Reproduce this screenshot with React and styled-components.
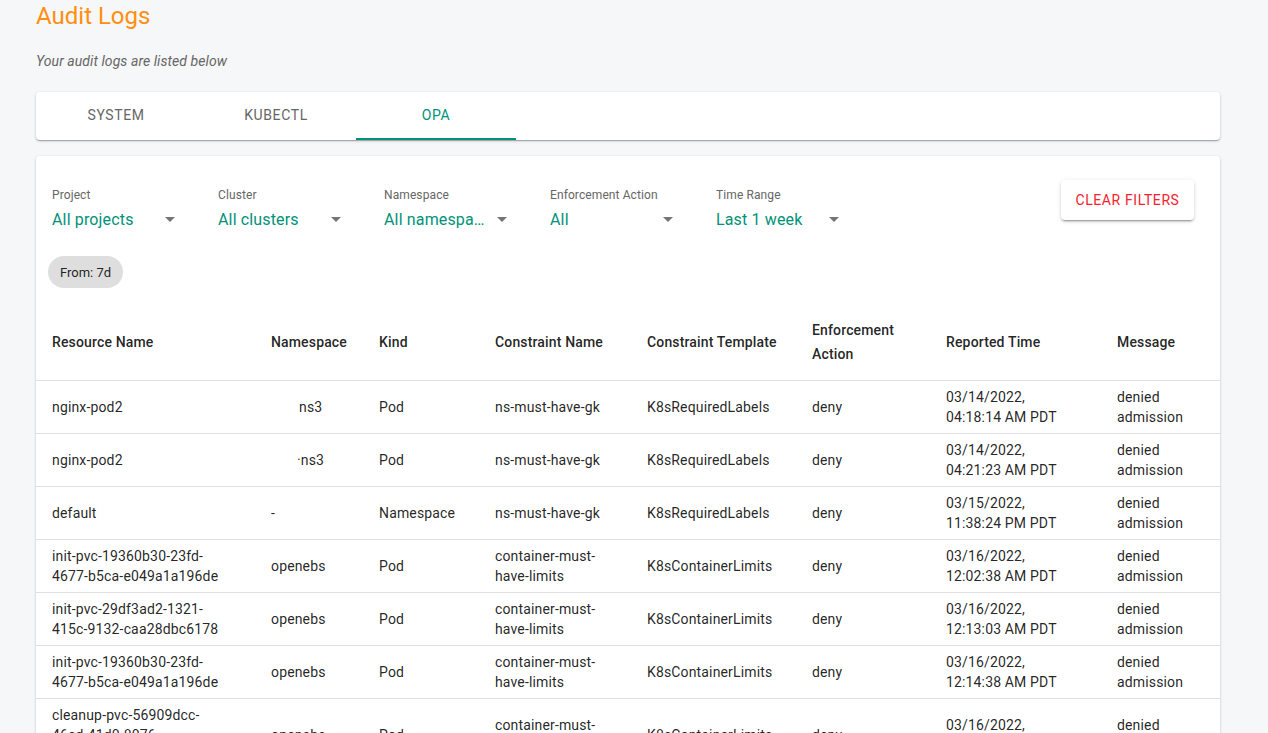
import React from "react";
import styled, { createGlobalStyle } from "styled-components";

const GlobalStyle = createGlobalStyle`
  html, body {
    margin: 0;
    height: 100%;
    overflow: hidden;
    background: #f6f7f9;
    font-family: Roboto, "Liberation Sans", sans-serif;
  }
`;

const Page = styled.div`
  height: 733px;
  overflow: hidden;
  padding: 0 48px 0 36px;
  box-sizing: border-box;
`;

const Title = styled.h1`
  margin: 0;
  font-size: 24px;
  font-weight: 400;
  line-height: 32px;
  color: #ff8f0f;
`;

const Subtitle = styled.p`
  margin: 19px 0 21px;
  font-size: 14px;
  font-style: italic;
  line-height: 20px;
  letter-spacing: 0.07px;
  color: #666;
`;

const Paper = styled.div`
  background: #fff;
  border-radius: 4px;
  box-shadow: 0 1px 3px rgba(0, 0, 0, 0.2), 0 1px 1px rgba(0, 0, 0, 0.14), 0 2px 1px -1px rgba(0, 0, 0, 0.12);
`;

const TabBar = styled(Paper)`
  display: flex;
  height: 48px;
  margin-bottom: 16px;
`;

const Tab = styled.div`
  width: 160px;
  display: flex;
  align-items: center;
  justify-content: center;
  box-sizing: border-box;
  font-size: 14px;
  font-weight: 400;
  letter-spacing: 0.6px;
  color: ${(p) => (p.$active ? "#009279" : "#666")};
  border-bottom: 2px solid ${(p) => (p.$active ? "#009279" : "transparent")};
`;

const Filters = styled.div`
  display: flex;
  align-items: flex-start;
  padding: 24px 26px 0 16px;
`;

const Select = styled.div`
  width: 126px;
  margin-right: 40px;
  padding-top: 8px;
`;

const SelectLabel = styled.div`
  font-size: 12px;
  line-height: 14px;
  letter-spacing: 0.1px;
  color: #666;
`;

const SelectValue = styled.div`
  display: flex;
  align-items: center;
  justify-content: space-between;
  margin-top: 5px;
  margin-right: -4px;
  height: 24px;
  font-size: 16px;
  letter-spacing: 0.15px;
  color: #009279;
`;

const ValueText = styled.span`
  width: 104px;
  white-space: nowrap;
  overflow: hidden;
  text-overflow: ellipsis;
`;

const Arrow = styled.svg`
  width: 24px;
  height: 24px;
  fill: #757575;
  flex: none;
`;

const ClearButton = styled.button`
  margin-left: auto;
  width: 133px;
  height: 40px;
  padding: 0;
  border: 0;
  border-radius: 4px;
  background: #fff;
  box-shadow: 0 3px 1px -2px rgba(0, 0, 0, 0.2), 0 2px 2px rgba(0, 0, 0, 0.14), 0 1px 5px rgba(0, 0, 0, 0.12);
  font-family: inherit;
  font-size: 14px;
  font-weight: 400;
  letter-spacing: 0.6px;
  color: #f5222d;
`;

const Chips = styled.div`
  padding: 25px 12px 16px;
`;

const Chip = styled.span`
  display: inline-flex;
  align-items: center;
  height: 32px;
  padding: 0 12px;
  border-radius: 16px;
  background: #dedede;
  font-size: 13px;
  color: rgba(0, 0, 0, 0.87);
`;

const Table = styled.table`
  width: 100%;
  table-layout: fixed;
  border-collapse: collapse;
`;

const HeadCell = styled.th`
  height: 76px;
  padding: 0 8px 0 16px;
  text-align: left;
  font-size: 14px;
  font-weight: 500;
  line-height: 24px;
  letter-spacing: 0.15px;
  color: rgba(0, 0, 0, 0.87);
  border-bottom: 1px solid #e0e0e0;
`;

const Cell = styled.td`
  height: 40px;
  padding: 6px ${(p) => p.$right || 8}px 6px 16px;
  font-size: 14px;
  line-height: 20px;
  letter-spacing: 0.15px;
  color: rgba(0, 0, 0, 0.87);
  border-bottom: 1px solid #e0e0e0;
  overflow-wrap: anywhere;
`;

const Indented = styled.span`
  display: inline-block;
  margin-left: ${(p) => p.$by}px;
`;

const filters = [
  ["Project", "All projects"],
  ["Cluster", "All clusters"],
  ["Namespace", "All namespaces"],
  ["Enforcement Action", "All"],
  ["Time Range", "Last 1 week"],
];

const widths = [219, 108, 116, 152, 165, 134, 171, 119];
const heads = ["Resource Name", "Namespace", "Kind", "Constraint Name", "Constraint Template", "Enforcement Action", "Reported Time", "Message"];

const rows = [
  ["nginx-pod2", <Indented $by={28}>ns3</Indented>, "Pod", "ns-must-have-gk", "K8sRequiredLabels", "03/14/2022, 04:18:14 AM PDT"],
  ["nginx-pod2", <Indented $by={26}>·ns3</Indented>, "Pod", "ns-must-have-gk", "K8sRequiredLabels", "03/14/2022, 04:21:23 AM PDT"],
  ["default", "-", "Namespace", "ns-must-have-gk", "K8sRequiredLabels", "03/15/2022, 11:38:24 PM PDT"],
  ["init-pvc-19360b30-23fd-4677-b5ca-e049a1a196de", "openebs", "Pod", "container-must-have-limits", "K8sContainerLimits", "03/16/2022, 12:02:38 AM PDT"],
  ["init-pvc-29df3ad2-1321-415c-9132-caa28dbc6178", "openebs", "Pod", "container-must-have-limits", "K8sContainerLimits", "03/16/2022, 12:13:03 AM PDT"],
  ["init-pvc-19360b30-23fd-4677-b5ca-e049a1a196de", "openebs", "Pod", "container-must-have-limits", "K8sContainerLimits", "03/16/2022, 12:14:38 AM PDT"],
  ["cleanup-pvc-56909dcc-46ed-41d0-8076-0d2c5ee1f7a4", "openebs", "Pod", "container-must-have-limits", "K8sContainerLimits", "03/16/2022, 12:20:11 AM PDT"],
];

export default function App() {
  return (
    <Page>
      <GlobalStyle />
      <Title>Audit Logs</Title>
      <Subtitle>Your audit logs are listed below</Subtitle>
      <TabBar>
        <Tab>SYSTEM</Tab>
        <Tab>KUBECTL</Tab>
        <Tab $active>OPA</Tab>
      </TabBar>
      <Paper>
        <Filters>
          {filters.map(([label, value]) => (
            <Select key={label}>
              <SelectLabel>{label}</SelectLabel>
              <SelectValue>
                <ValueText>{value}</ValueText>
                <Arrow viewBox="0 0 24 24">
                  <path d="M7 10l5 5 5-5z" />
                </Arrow>
              </SelectValue>
            </Select>
          ))}
          <ClearButton>CLEAR FILTERS</ClearButton>
        </Filters>
        <Chips>
          <Chip>From: 7d</Chip>
        </Chips>
        <Table>
          <colgroup>
            {widths.map((w, i) => (
              <col key={i} width={w} />
            ))}
          </colgroup>
          <thead>
            <tr>
              {heads.map((h) => (
                <HeadCell key={h}>{h}</HeadCell>
              ))}
            </tr>
          </thead>
          <tbody>
            {rows.map((r, i) => (
              <tr key={i}>
                <Cell $right={32}>{r[0]}</Cell>
                <Cell>{r[1]}</Cell>
                <Cell>{r[2]}</Cell>
                <Cell>{r[3]}</Cell>
                <Cell>{r[4]}</Cell>
                <Cell>deny</Cell>
                <Cell $right={32}>{r[5]}</Cell>
                <Cell>denied admission</Cell>
              </tr>
            ))}
          </tbody>
        </Table>
      </Paper>
    </Page>
  );
}
